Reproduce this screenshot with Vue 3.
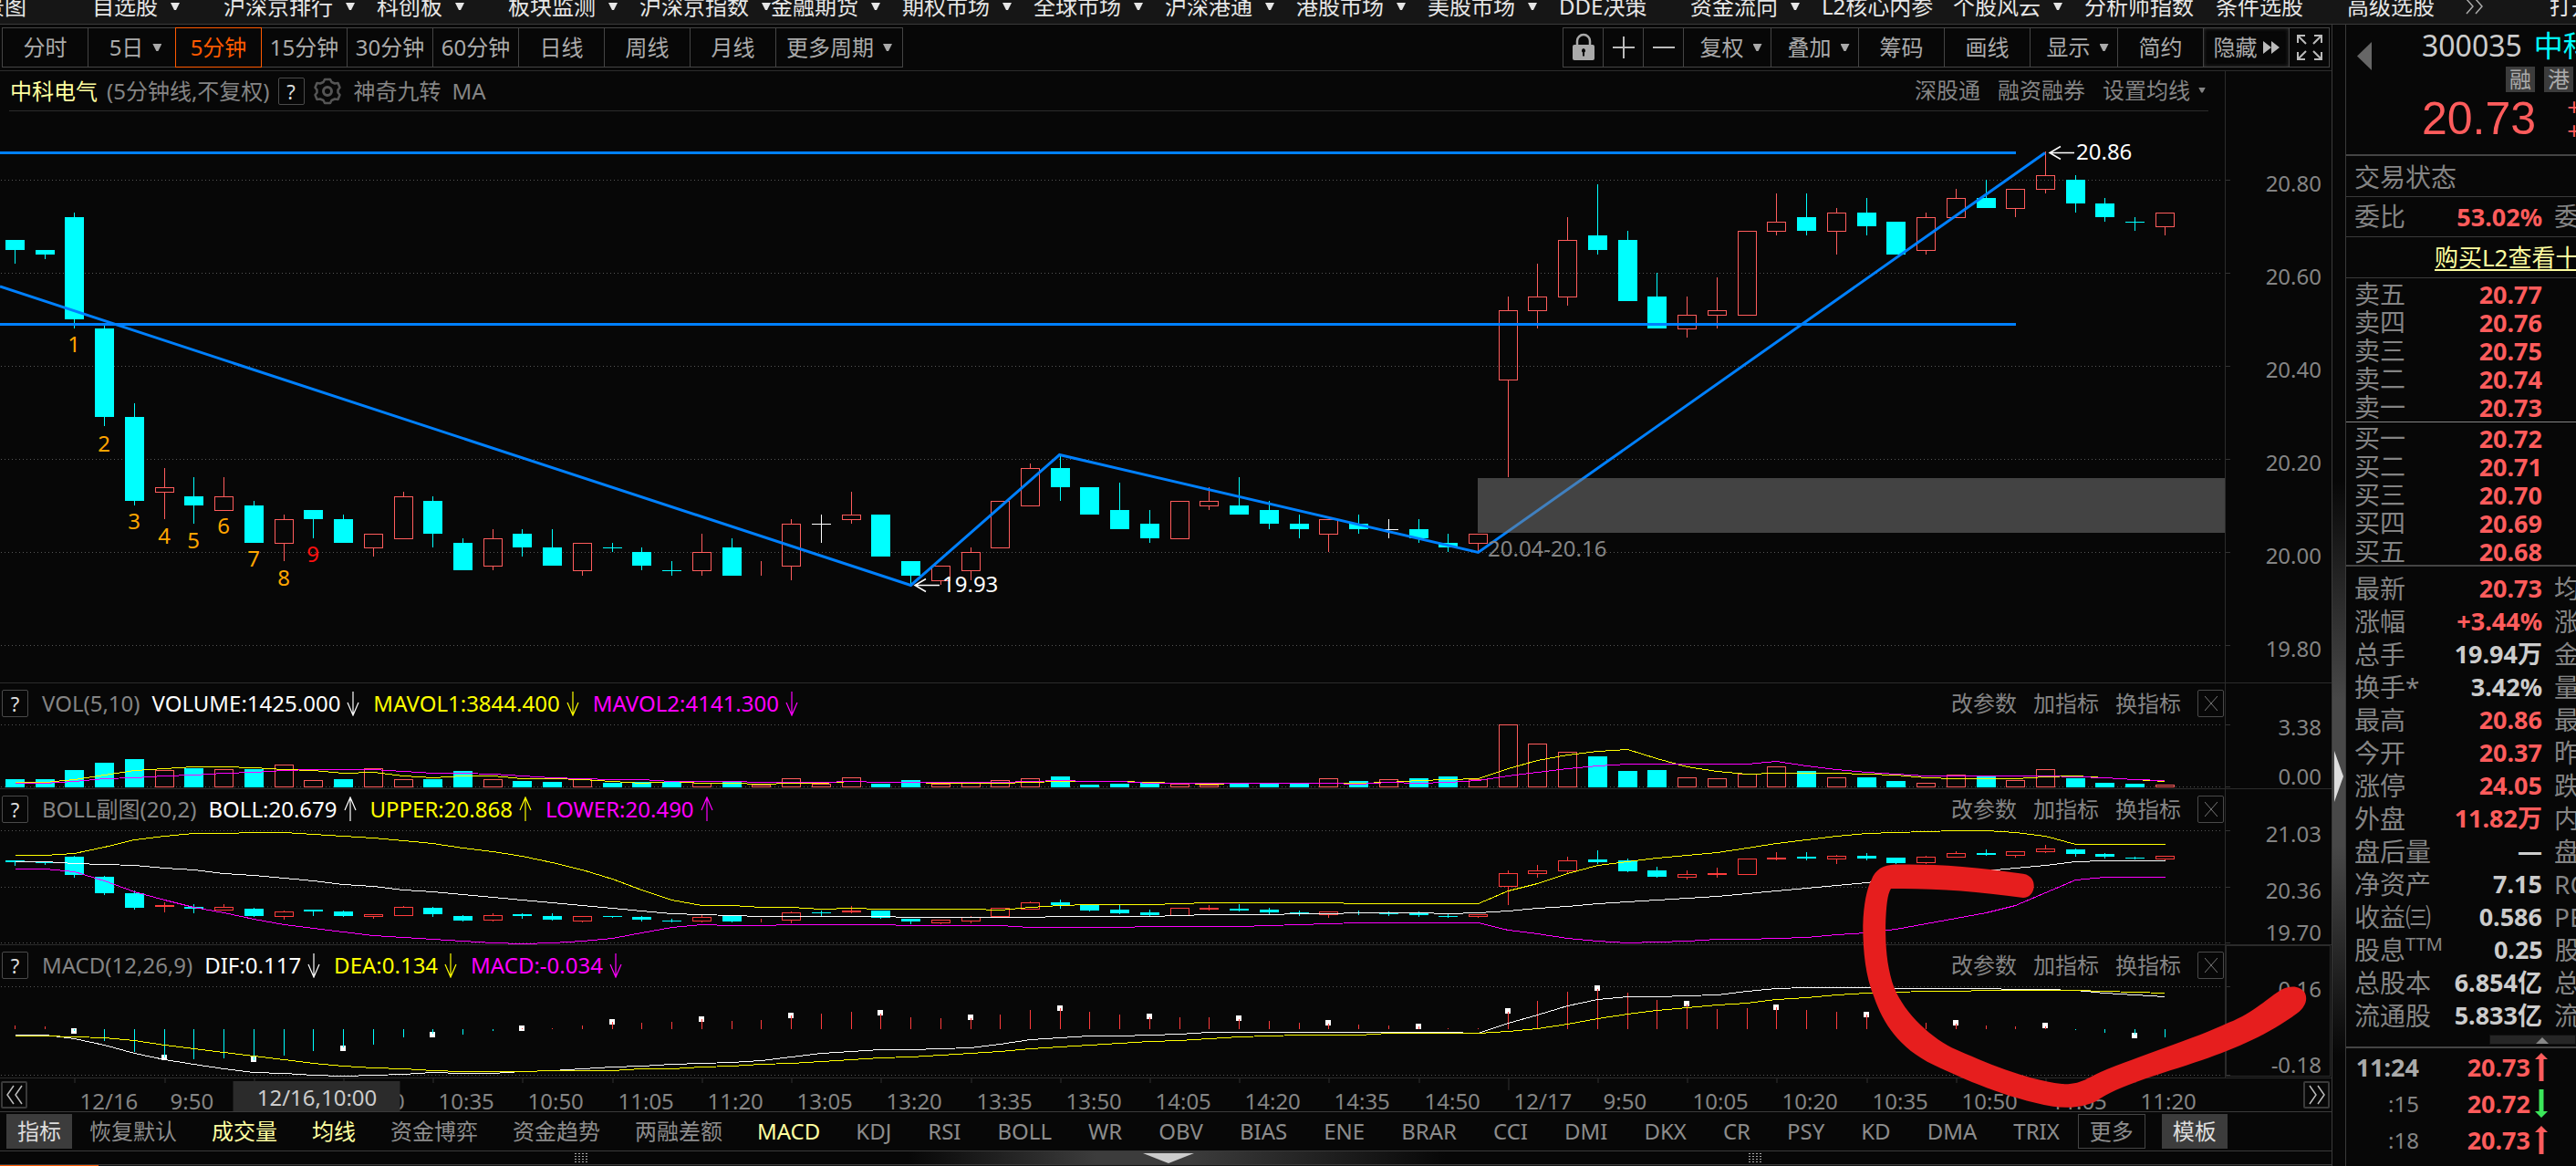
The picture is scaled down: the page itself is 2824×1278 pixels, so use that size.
<script setup>
const navItems = [
  { t: '全景图' }, { t: '自选股', a: 1 }, { t: '沪深京排行', a: 1, w: 1 }, { t: '科创板', a: 1 },
  { t: '板块监测', a: 1 }, { t: '沪深京指数', a: 1 }, { t: '金融期货', a: 1 }, { t: '期权市场', a: 1 },
  { t: '全球市场', a: 1 }, { t: '沪深港通', a: 1 }, { t: '港股市场', a: 1 }, { t: '美股市场', a: 1 },
  { t: 'DDE决策' }, { t: '资金流向', a: 1 }, { t: 'L2核心内参' }, { t: '个股风云', a: 1 },
  { t: '分析师指数' }, { t: '条件选股' }, { t: '高级选股' }
]
const periods = ['分时', '5日', '5分钟', '15分钟', '30分钟', '60分钟', '日线', '周线', '月线']
const tools = [
  { t: '复权', a: 1 }, { t: '叠加', a: 1 }, { t: '筹码' }, { t: '画线' }, { t: '显示', a: 1 }, { t: '简约' }
]
const tabs = [
  { t: '恢复默认' }, { t: '成交量', on: 1 }, { t: '均线', on: 1 }, { t: '资金博弈' }, { t: '资金趋势' },
  { t: '两融差额' }, { t: 'MACD', on: 1 }, { t: 'KDJ' }, { t: 'RSI' }, { t: 'BOLL' }, { t: 'WR' },
  { t: 'OBV' }, { t: 'BIAS' }, { t: 'ENE' }, { t: 'BRAR' }, { t: 'CCI' }, { t: 'DMI' }, { t: 'DKX' },
  { t: 'CR' }, { t: 'PSY' }, { t: 'KD' }, { t: 'DMA' }, { t: 'TRIX' }
]

// [kind, high, body top, body bottom, low] in cents above 19.00; r = rise, c = fall, w = flat
const candles = [
  ['c', 167, 167, 165, 162], ['c', 165, 165, 164, 163], ['c', 173, 172, 150, 148], ['c', 149, 148, 129, 127],
  ['c', 132, 129, 111, 110], ['r', 118, 114, 113, 107], ['c', 116, 112, 110, 106], ['r', 116, 112, 109, 109],
  ['c', 111, 110, 102, 102], ['r', 108, 107, 102, 98], ['c', 109, 109, 107, 103], ['c', 108, 107, 102, 102],
  ['r', 104, 104, 101, 99], ['r', 113, 112, 103, 103], ['c', 112, 111, 104, 101], ['c', 103, 102, 96, 96],
  ['r', 105, 103, 97, 96], ['c', 105, 104, 101, 99], ['c', 105, 101, 97, 97], ['r', 102, 102, 96, 95],
  ['c', 102, 101, 101, 100], ['c', 101, 100, 97, 96], ['c', 98, 96, 96, 95], ['r', 104, 100, 96, 95],
  ['c', 103, 101, 95, 95], ['r', 98, 96, 96, 95], ['r', 107, 106, 97, 94], ['w', 108, 106, 106, 102],
  ['r', 113, 108, 107, 106], ['c', 108, 108, 99, 99], ['c', 98, 98, 95, 93], ['r', 97, 97, 94, 93],
  ['r', 101, 100, 96, 94], ['r', 111, 111, 101, 101], ['r', 119, 118, 110, 110], ['c', 121, 118, 114, 111],
  ['c', 114, 114, 108, 108], ['c', 115, 109, 105, 105], ['c', 109, 106, 103, 102], ['r', 111, 111, 103, 103],
  ['r', 114, 111, 110, 109], ['c', 116, 110, 108, 108], ['c', 111, 109, 106, 105], ['c', 108, 106, 105, 103],
  ['r', 107, 107, 104, 100], ['c', 108, 106, 105, 104], ['w', 107, 105, 105, 103], ['c', 107, 105, 103, 102],
  ['c', 104, 102, 101, 100], ['r', 104, 104, 102, 100], ['r', 155, 152, 137, 116], ['r', 162, 155, 152, 148],
  ['r', 172, 167, 155, 153], ['c', 179, 168, 165, 164], ['c', 169, 167, 154, 154], ['c', 160, 155, 148, 148],
  ['r', 155, 151, 148, 146], ['r', 159, 152, 151, 148], ['r', 169, 169, 151, 151], ['r', 177, 171, 169, 168],
  ['c', 177, 172, 169, 168], ['r', 174, 173, 169, 164], ['c', 176, 173, 170, 168], ['c', 171, 171, 164, 164],
  ['r', 173, 172, 165, 164], ['r', 178, 176, 172, 172], ['c', 180, 176, 174, 174], ['r', 178, 178, 174, 172],
  ['r', 186, 181, 178, 177], ['c', 181, 180, 175, 173], ['c', 176, 175, 172, 171], ['c', 172, 171, 171, 169],
  ['r', 173, 173, 170, 168]
]
const volumes = [25, 25, 54, 77, 89, 53, 60, 56, 57, 70, 21, 25, 59, 24, 25, 51, 24, 19, 16, 24, 13, 15, 17, 12, 15, 6, 27, 9, 30, 10, 22, 9, 12, 21, 27, 33, 7, 10, 14, 9, 8, 11, 11, 11, 27, 19, 24, 28, 33, 26, 199, 137, 111, 98, 51, 54, 32, 27, 43, 67, 51, 32, 31, 19, 12, 38, 34, 21, 56, 28, 13, 10, 6]
const volMa5 = [340, 340, 331, 318, 303, 297, 290, 290, 295, 299, 303, 313, 310, 320, 327, 322, 322, 330, 330, 331, 339, 343, 339, 343, 343, 346, 344, 343, 339, 341, 340, 343, 343, 343, 341, 337, 337, 337, 340, 343, 348, 345, 345, 345, 343, 343, 340, 336, 331, 330, 296, 272, 254, 243, 237, 266, 290, 305, 316, 313, 313, 313, 314, 319, 326, 330, 330, 330, 324, 322, 327, 332, 337]
const volMa10 = [345, 345, 339, 329, 325, 320, 317, 312, 308, 302, 301, 301, 301, 307, 313, 313, 316, 322, 325, 329, 331, 331, 337, 337, 337, 342, 342, 342, 339, 342, 342, 342, 342, 342, 339, 336, 337, 339, 343, 343, 343, 343, 343, 343, 343, 346, 342, 343, 340, 336, 320, 308, 296, 288, 284, 282, 282, 282, 282, 275, 288, 300, 310, 316, 322, 322, 322, 322, 322, 324, 327, 332, 334]
const bollUpper = [575, 575, 569, 549, 526, 514, 505, 505, 502, 502, 508, 514, 520, 528, 537, 551, 563, 578, 598, 620, 650, 685, 717, 735, 735, 741, 741, 747, 744, 745, 747, 747, 747, 750, 739, 735, 732, 732, 732, 729, 727, 727, 727, 727, 727, 730, 730, 730, 730, 730, 688, 664, 631, 606, 594, 584, 574, 566, 552, 537, 526, 514, 505, 502, 499, 496, 496, 501, 514, 540, 540, 540, 540]
const bollMid = [596, 596, 600, 602, 607, 616, 622, 631, 639, 648, 657, 666, 674, 684, 692, 700, 709, 718, 727, 735, 744, 753, 762, 765, 767, 770, 770, 770, 770, 770, 773, 773, 773, 773, 773, 770, 770, 768, 768, 767, 765, 765, 763, 762, 760, 759, 759, 759, 762, 759, 753, 744, 736, 728, 723, 718, 712, 705, 698, 688, 679, 671, 663, 650, 640, 632, 625, 615, 606, 596, 593, 593, 591]
const bollLower = [619, 619, 628, 655, 690, 716, 739, 757, 779, 795, 806, 820, 832, 837, 843, 849, 855, 858, 855, 849, 839, 822, 804, 797, 800, 800, 797, 797, 797, 797, 800, 800, 800, 800, 804, 804, 804, 804, 802, 802, 802, 802, 799, 797, 794, 791, 791, 791, 791, 791, 814, 826, 840, 849, 853, 852, 849, 843, 843, 840, 836, 829, 821, 809, 794, 776, 759, 733, 695, 652, 645, 643, 643]
const macdBars = [1119, 1121, 1137, 1169, 1204, 1220, 1227, 1224, 1230, 1215, 1201, 1190, 1180, 1158, 1145, 1148, 1137, 1128, 1128, 1119, 1108, 1110, 1108, 1100, 1104, 1101, 1088, 1081, 1075, 1080, 1092, 1096, 1095, 1084, 1070, 1065, 1075, 1084, 1092, 1092, 1092, 1098, 1105, 1110, 1114, 1116, 1119, 1123, 1127, 1127, 1075, 1040, 1011, 1003, 1014, 1038, 1052, 1066, 1063, 1060, 1070, 1075, 1085, 1095, 1110, 1114, 1119, 1121, 1122, 1133, 1142, 1148, 1157]
const dif = [1149, 1149, 1159, 1180, 1208, 1227, 1243, 1255, 1267, 1272, 1276, 1280, 1278, 1273, 1269, 1272, 1270, 1264, 1263, 1257, 1250, 1246, 1243, 1238, 1235, 1230, 1219, 1208, 1200, 1196, 1196, 1193, 1190, 1178, 1164, 1156, 1152, 1150, 1149, 1146, 1141, 1141, 1141, 1141, 1139, 1140, 1141, 1141, 1141, 1143, 1109, 1083, 1054, 1034, 1025, 1025, 1022, 1020, 1008, 1001, 998, 996, 996, 1000, 1001, 999, 1001, 1002, 1002, 1006, 1015, 1020, 1027]
const dea = [1152, 1152, 1153, 1158, 1167, 1179, 1193, 1204, 1216, 1228, 1238, 1246, 1252, 1257, 1261, 1264, 1264, 1264, 1263, 1261, 1261, 1257, 1255, 1250, 1247, 1242, 1239, 1234, 1226, 1220, 1217, 1212, 1208, 1202, 1193, 1185, 1179, 1174, 1170, 1165, 1159, 1155, 1152, 1149, 1147, 1147, 1143, 1143, 1143, 1143, 1138, 1127, 1112, 1095, 1082, 1071, 1060, 1052, 1045, 1036, 1028, 1021, 1015, 1012, 1009, 1007, 1006, 1005, 1005, 1006, 1007, 1010, 1013]
const squareTops = [1128, 1213, 1218, 1183, 1140, 1119, 1099, 1090, 1078, 1070, 1084, 1055, 1081, 1087, 1102, 1113, 1064, 991, 1040, 1052, 1075, 1102, 1110, 1142]

const SCALE = 2.9145
const x = i => Math.round(i * 32.735) + 16
const level = v => Math.round(740 + v / SCALE)
const line = arr => arr.map((v, i) => `${x(i) + 0.5},${level(v) + 0.5}`).join(' ')
const priceY = c => Math.round(197 + (180 - c) * 5.1)
const bollY = c => Math.round(910 + (203 - c) * 0.926)

const build = fy => candles.map(([k, h, t, b, l], i) => ({
  k, x: x(i), h: fy(h), t: fy(t), b: fy(b), l: fy(l)
}))
const priceCandles = build(priceY)
const bollCandles = build(bollY).map(c => ({ ...c, k: c.k === 'w' ? 'c' : c.k }))
const volBars = volumes.map((v, i) => ({
  x: x(i), y: level(357 - v), k: i === 10 || candles[i][0] !== 'c' ? 'r' : 'c'
}))
const bars = macdBars.map((v, i) => ({ x: x(i), y: level(v), up: v < 1130 }))
const squares = squareTops.map((v, n) => ({ x: x(2 + n * 3) - 3, y: level(v) }))

const priceGrid = [['20.80', 197], ['20.60', 299], ['20.40', 401], ['20.20', 503], ['20.00', 605], ['19.80', 707]]
const turns = [[2, 386], [3, 495], [4, 580], [5, 596], [6, 601], [7, 585], [8, 621], [9, 642], [10, 616]]
const times = ['12/16', '9:50', '', '10:20', '10:35', '10:50', '11:05', '11:20', '13:05', '13:20', '13:35', '13:50', '14:05', '14:20', '14:35', '14:50', '12/17', '9:50', '10:05', '10:20', '10:35', '10:50', '11:05', '11:20']
  .map((t, n) => ({ t, x: x(2 + n * 3), long: n === 16 }))

const panes = [
  {
    id: 'vol', name: 'VOL(5,10)', top: 793, h: 71,
    vals: [['VOLUME:1425.000', 'white', 0], ['MAVOL1:3844.400', 'yellow', 0], ['MAVOL2:4141.300', 'magenta', 0]],
    grid: [794, 862], labels: [['3.38', 806], ['0.00', 860]],
    lines: [[volMa5, '#ffff00'], [volMa10, '#ff00ff']]
  },
  {
    id: 'boll', name: 'BOLL副图(20,2)', top: 909, h: 126,
    vals: [['BOLL:20.679', 'white', 1], ['UPPER:20.868', 'yellow', 1], ['LOWER:20.490', 'magenta', 1]],
    grid: [910, 972, 1033], labels: [['21.03', 923], ['20.36', 985], ['19.70', 1031]],
    lines: [[bollUpper, '#ffff00'], [bollMid, '#ffffff'], [bollLower, '#ff00ff']]
  },
  {
    id: 'macd', name: 'MACD(12,26,9)', top: 1080, h: 101,
    vals: [['DIF:0.117', 'white', 0], ['DEA:0.134', 'yellow', 0], ['MACD:-0.034', 'magenta', 0]],
    grid: [1081, 1178], labels: [['0.16', 1093], ['-0.18', 1176]],
    lines: [[dif, '#ffffff'], [dea, '#ffff00']]
  }
]

const asks = [['卖五', '20.77'], ['卖四', '20.76'], ['卖三', '20.75'], ['卖二', '20.74'], ['卖一', '20.73']]
const bids = [['买一', '20.72'], ['买二', '20.71'], ['买三', '20.70'], ['买四', '20.69'], ['买五', '20.68']]
const stats = [
  ['最新', '20.73', 'up', '均价'], ['涨幅', '+3.44%', 'up', '涨跌'], ['总手', '19.94万', '', '金额'],
  ['换手*', '3.42%', '', '量比'], ['最高', '20.86', 'up', '最低'], ['今开', '20.37', 'up', '昨收'],
  ['涨停', '24.05', 'up', '跌停'], ['外盘', '11.82万', 'up', '内盘'], ['盘后量', '—', '', '盘后额'],
  ['净资产', '7.15', '', 'ROE'], ['收益㈢', '0.586', '', 'PE'], ['股息', '0.25', '', '股息率'],
  ['总股本', '6.854亿', '', '总值'], ['流通股', '5.833亿', '', '流值']
]
const ticks = [['11:24', '20.73', 1], [':15', '20.72', 0], [':18', '20.73', 1]]
</script>

<template>
  <div class="app">
    <nav class="nav">
      <a v-for="n in navItems" :key="n.t" href="#" :class="{ wide: n.w }">{{ n.t }}<i v-if="n.a" class="tri"></i></a>
      <a href="#" class="next" aria-label="更多">
        <svg width="20" height="18" viewBox="0 0 20 18"><path d="M1 1l7 8-7 8M11 1l7 8-7 8" fill="none" stroke="#aaa" stroke-width="1.5" /></svg>
      </a>
      <a href="#">打开</a>
    </nav>

    <div class="body">
      <main class="main">
        <div class="toolbar">
          <div class="group">
            <button v-for="p in periods" :key="p" :class="{ active: p === '5分钟', drop: p === '5日' }">{{ p }}<i v-if="p === '5日'" class="tri"></i></button>
            <button class="more">更多周期<i class="tri"></i></button>
          </div>
          <div class="group">
            <button class="sq" aria-label="锁定">
              <svg width="26" height="32" viewBox="0 0 26 32"><path d="M6 14V9a7 7 0 0 1 14 0v5" fill="none" stroke="#aaa" stroke-width="2.5" /><rect x="1" y="13" width="24" height="17" rx="2" fill="#aaa" /><path d="M13 17a2.5 2.5 0 0 1 1 4.500v4h-2v-4a2.500 2.500 0 0 1 1-4.500z" fill="#070707" /></svg>
            </button>
            <button class="sq" aria-label="放大"><svg width="24" height="24" viewBox="0 0 24 24"><path d="M12 0v24M0 12h24" stroke="#bbb" stroke-width="2" /></svg></button>
            <button class="sq" aria-label="缩小"><svg width="24" height="24" viewBox="0 0 24 24"><path d="M0 12h24" stroke="#bbb" stroke-width="2" /></svg></button>
            <button v-for="t in tools" :key="t.t" :class="{ drop: t.a }">{{ t.t }}<i v-if="t.a" class="tri"></i></button>
            <button class="hide">隐藏<svg width="18" height="14" viewBox="0 0 18 14"><path d="M0 0l9 7-9 7zM9 0l9 7-9 7z" fill="#bbb" /></svg></button>
            <button class="sq" aria-label="全屏">
              <svg width="28" height="28" viewBox="0 0 28 28"><path d="M1 9V1h8M2 2l8 8M19 1h8v8M26 2l-8 8M1 19v8h8M2 26l8-8M27 19v8h-8M26 26l-8-8" fill="none" stroke="#bbb" stroke-width="2" /></svg>
            </button>
          </div>
        </div>

        <section class="pane">
          <header class="title">
            <div class="plot">
              <b class="stock">中科电气</b>
              <span class="cycle">(5分钟线,不复权)</span>
              <button class="box help">?</button>
              <svg class="gear" width="30" height="30" viewBox="0 0 30 30"><path d="M12 2h6l1.500 3 3.500 1.500 3.500-.5 2 5-2 2.500v3l2 2.500-2 5-3.500-.5-3.500 1.500L18 28h-6l-1.500-3L7 23.500l-3.500.5-2-5 2-2.500v-3l-2-2.500 2-5 3.500.5L10.500 5z" fill="none" stroke="#555" stroke-width="2.500" stroke-linejoin="round" /><circle cx="15" cy="15" r="4.500" fill="none" stroke="#555" stroke-width="3" /></svg>
              <span>神奇九转</span><span class="ma">MA</span>
              <div class="links"><a href="#">深股通</a><a href="#">融资融券</a><a href="#">设置均线<i class="tri"></i></a></div>
            </div>
            <div class="scale"></div>
          </header>
          <svg class="chart" viewBox="0 121 2556 627">
            <g shape-rendering="crispEdges">
              <path d="M10 121.500H2421" stroke="#2b2b2b" />
              <path d="M2439.500 121V748" stroke="#2b2b2b" />
              <g v-for="g in priceGrid" :key="g[0]">
                <path :d="`M1 ${g[1] + 0.5}H2436`" stroke="#555" stroke-dasharray="1 3" />
                <path :d="`M2440 ${g[1] + 0.5}h5`" stroke="#333" />
              </g>
              <g v-for="c in priceCandles" :key="c.x">
                <template v-if="c.k === 'c'">
                  <path :d="`M${c.x + 0.5} ${c.h}V${c.l}`" stroke="#00ffff" />
                  <rect :x="c.x - 10" :y="c.t" width="21" :height="Math.max(1, c.b - c.t)" fill="#00ffff" />
                </template>
                <template v-else-if="c.k === 'r'">
                  <path :d="`M${c.x + 0.5} ${c.h}V${c.t}M${c.x + 0.5} ${c.b}V${c.l}`" stroke="#ff5c5c" />
                  <rect :x="c.x - 9.500" :y="c.t + 0.5" width="20" :height="c.b - c.t" fill="none" stroke="#ff5c5c" />
                </template>
                <path v-else :d="`M${c.x + 0.5} ${c.h}V${c.l}M${c.x - 10} ${c.t + 0.5}h21`" stroke="#fff" />
              </g>
              <g fill="none" stroke="#0080ff" stroke-width="3">
                <path d="M0 167.500H2210M0 355.500H2210" />
              </g>
            </g>
            <path d="M0 314L998.500 641.500L1161.500 498.500L1620.500 605.500L2242 167.500" fill="none" stroke="#0080ff" stroke-width="3" />
            <rect x="1620" y="524" width="819" height="60" fill="#808080" fill-opacity=".5" />
            <path d="M2274 167.500H2247M2259 160.500l-12 7 12 7M1030 641.500H1003M1015 634.500l-12 7 12 7" fill="none" stroke="#fff" stroke-width="1.500" />
            <text class="t white" x="2276" y="175">20.86</text>
            <text class="t white" x="1033" y="649">19.93</text>
            <text class="t" x="1631" y="610">20.04-20.16</text>
            <text v-for="(n, i) in turns" :key="i" class="t turn" :class="{ last: i === 8 }" :x="x(n[0])" :y="n[1]">{{ i + 1 }}</text>
            <text v-for="g in priceGrid" :key="g[0]" class="t end" x="2545" :y="g[1] + 13">{{ g[0] }}</text>
          </svg>
        </section>

        <section v-for="p in panes" :key="p.id" class="pane">
          <header class="head">
            <div class="plot">
              <button class="box help">?</button>
              <span class="name">{{ p.name }}</span>
              <span v-for="v in p.vals" :key="v[0]" class="val" :class="v[1]">{{ v[0] }}<svg width="14" height="28" viewBox="0 0 14 28"><path :d="v[2] ? 'M7 1v26M1 15L7 1l6 14' : 'M7 1v26M1 13l6 14 6-14'" fill="none" stroke="currentColor" stroke-width="1.200" /></svg></span>
              <div class="links"><a href="#">改参数</a><a href="#">加指标</a><a href="#">换指标</a></div>
              <button class="box" aria-label="关闭"><svg width="14" height="16" viewBox="0 0 14 16"><path d="M0 0l14 16M14 0L0 16" stroke="#777" /></svg></button>
            </div>
            <div class="scale"></div>
          </header>
          <svg class="chart" :viewBox="`0 ${p.top} 2556 ${p.h}`">
            <g shape-rendering="crispEdges" fill="none">
              <path :d="`M2439.500 ${p.top}v${p.h}`" stroke="#2b2b2b" />
              <path v-for="g in p.grid" :key="g" :d="`M1 ${g + 0.5}H2436`" stroke="#555" stroke-dasharray="1 3" />
              <path v-for="g in p.grid" :key="'k' + g" :d="`M2440 ${g + 0.5}h5`" stroke="#333" />
              <rect v-if="p.id === 'macd'" x="2440.500" y="1036.500" width="114" height="143" stroke="#2b2b2b" />
              <template v-if="p.id === 'vol'">
                <template v-for="b in volBars" :key="b.x">
                  <rect v-if="b.k === 'c'" :x="b.x - 10" :y="b.y" width="21" :height="863 - b.y" fill="#00ffff" />
                  <rect v-else :x="b.x - 9.500" :y="b.y + 0.5" width="20" :height="862 - b.y" stroke="#ff5c5c" />
                </template>
              </template>
              <template v-if="p.id === 'boll'">
                <g v-for="c in bollCandles" :key="c.x">
                  <path :d="`M${c.x + 0.5} ${c.h}V${c.t}M${c.x + 0.5} ${c.b}V${c.l + 1}`" :stroke="c.k === 'c' ? '#00ffff' : '#ff3c3c'" />
                  <rect v-if="c.k === 'c'" :x="c.x - 10" :y="c.t" width="21" :height="Math.max(1, c.b - c.t)" fill="#00ffff" />
                  <rect v-else :x="c.x - 9.500" :y="c.t + 0.5" width="20" :height="c.b - c.t" stroke="#ff3c3c" />
                </g>
              </template>
              <template v-if="p.id === 'macd'">
                <rect v-for="s in squares" :key="s.x" :x="s.x" :y="s.y" width="6" height="6" fill="#fff" />
                <path v-for="b in bars" :key="b.x" :d="`M${b.x + 0.5} 1127.500V${b.y}`" :stroke="b.up ? '#ff3c3c' : '#00ffff'" />
              </template>
              <polyline v-for="l in p.lines" :key="l[1]" :points="line(l[0])" :stroke="l[1]" />
            </g>
            <text v-for="l in p.labels" :key="l[0]" class="t end" x="2545" :y="l[1]">{{ l[0] }}</text>
          </svg>
        </section>

        <div class="timeline">
          <button class="box" aria-label="向前"><svg width="20" height="22" viewBox="0 0 20 22"><path d="M9 1L2 11l7 10M18 1l-7 10 7 10" fill="none" stroke="#bbb" stroke-width="1.500" /></svg></button>
          <svg class="chart" viewBox="30 1182 2494 36">
            <path v-for="t in times" :key="t.x" :d="`M${t.x + 0.5} 1182v${t.long ? 13 : 5}`" stroke="#333" />
            <text v-for="t in times" :key="t.x" class="t" :x="t.x + 6" y="1216">{{ t.t }}</text>
            <rect x="255" y="1185" width="183" height="33" fill="#2b2b2b" />
            <text class="t cursor" x="347" y="1212">12/16,10:00</text>
          </svg>
          <button class="box" aria-label="向后"><svg width="20" height="22" viewBox="0 0 20 22"><path d="M2 1l7 10-7 10M11 1l7 10-7 10" fill="none" stroke="#bbb" stroke-width="1.500" /></svg></button>
        </div>

        <div class="tabs">
          <button class="fill">指标</button>
          <button v-for="(t, i) in tabs" :key="t.t" :class="{ on: t.on, latin: i > 6 }">{{ t.t }}</button>
          <button class="outline">更多</button>
          <button class="fill">模板</button>
        </div>

        <div class="grip">
          <i class="dots"></i>
          <svg width="56" height="11" viewBox="0 0 56 11"><path d="M0 0h56L28 11z" fill="#ccc" /></svg>
          <i class="dots"></i>
        </div>
        <div class="foot"><i></i></div>

        <svg class="mark" viewBox="0 0 2556 1250">
          <g transform="translate(1800 713) scale(.65306 .34311)">
            <path fill="#e61e1e" d="M425 605C480 602 560 610 640 635C655 640 658 660 658 673C658 695 650 711 640 711C560 690 490 680 418 682C412 700 410 740 409 800C409 870 411 920 420 980C435 1070 480 1150 520 1190C580 1240 640 1290 705 1306C735 1308 745 1290 770 1268C830 1220 930 1160 985 1110C1030 1075 1050 1030 1075 1003C1090 990 1105 992 1113 1015C1118 1035 1114 1060 1100 1080C1050 1150 1000 1190 940 1230C870 1275 800 1310 762 1362C740 1380 715 1385 690 1378C610 1350 540 1290 490 1245C430 1190 405 1110 390 1030C375 960 371 880 371 800C372 730 378 680 385 655C392 620 405 607 425 605Z" />
          </g>
        </svg>
      </main>

      <div class="splitter"><svg width="10" height="56" viewBox="0 0 10 56"><path d="M0 0l10 28L0 56z" fill="#ddd" /></svg></div>

      <aside class="side">
        <div class="quote">
          <svg class="prev" width="16" height="31" viewBox="0 0 16 31"><path d="M16 0v31L0 15.500z" fill="#666" /></svg>
          <div class="code"><span>300035</span><span class="cyan">中科电气</span></div>
          <div class="badges"><span>融</span><span>港</span></div>
          <div class="price"><strong>20.73</strong><div><span>+0.69</span><span>+3.44%</span></div></div>
        </div>
        <div class="state">交易状态</div>
        <div class="row ratio"><span>委比</span><b class="up">53.02%</b><span>委差</span></div>
        <div class="buy"><a href="#">购买L2查看十档</a></div>
        <div class="book">
          <div v-for="r in asks" :key="r[0]" class="row"><span>{{ r[0] }}</span><b class="up">{{ r[1] }}</b></div>
        </div>
        <div class="book bids">
          <div v-for="r in bids" :key="r[0]" class="row"><span>{{ r[0] }}</span><b class="up">{{ r[1] }}</b></div>
        </div>
        <div class="stats">
          <div v-for="r in stats" :key="r[0]" class="row"><span>{{ r[0] }}<sup v-if="r[0] === '股息'">TTM</sup></span><b :class="r[2]">{{ r[1] }}</b><span>{{ r[3] }}</span></div>
        </div>
        <div class="fold"><button aria-label="收起"><svg width="14" height="7" viewBox="0 0 14 7"><path d="M0 7l7-7 7 7z" fill="#888" /></svg></button></div>
        <div class="ticks">
          <div v-for="(r, i) in ticks" :key="i" class="tick">
            <span :class="{ first: i === 0 }">{{ r[0] }}</span><b class="up">{{ r[1] }}</b>
            <svg width="14" height="32" viewBox="0 0 14 32"><path :d="r[2] ? 'M7 0l7 7H9.500v24h-5V7H0z' : 'M7 31l7-7H9.500V0h-5v24H0z'" :fill="r[2] ? '#ff5c5c' : '#3ce65a'" /></svg>
          </div>
        </div>
      </aside>
    </div>
  </div>
</template>

<style>
body { background: #070707; }
</style>

<style scoped>
.app { background: #070707; color: #848484; font: 24px/32px "Noto Sans", "Noto Sans CJK SC", sans-serif; overflow: hidden; white-space: nowrap; }
.app * { box-sizing: border-box; }
a { color: inherit; text-decoration: none; }
button { font: inherit; color: inherit; background: none; border: 0; padding: 0; margin: 0; }
svg { display: block; }
.tri { display: inline-block; width: 10px; height: 8px; background: currentColor; clip-path: polygon(0 0, 100% 0, 60% 100%, 40% 100%); }

.nav { display: flex; align-items: flex-end; height: 27px; margin-left: -43px; padding-bottom: 3px; background: #161616; border-bottom: 1px solid #3a3a3a; color: #e6e6e6; overflow: hidden; }
.nav a { flex: 0 0 144px; display: flex; align-items: center; gap: 14px; }
.nav a.wide { flex-basis: 168px; }
.nav .next { flex-basis: 92px; margin-left: -14px; height: 32px; }

.body { display: flex; align-items: stretch; }
.main { flex: 1; min-width: 0; position: relative; }
.toolbar { display: flex; justify-content: space-between; height: 51px; padding: 3px 3px 0 2px; border-bottom: 1px solid #2b2b2b; color: #aaa; }
.group { display: flex; height: 44px; }
.group button { width: 95px; margin-right: -1px; border: 1px solid #444; display: flex; align-items: center; justify-content: center; gap: 10px; }
.group button.drop { width: 97px; padding-left: 8px; }
.group button.active { color: #ff5a00; border-color: #ff5a00; position: relative; }
.group button.more { width: 140px; }
.group button.sq { width: 45px; }
.group button.hide { gap: 6px; box-shadow: inset 0 0 4px #333; }

.pane { border-bottom: 1px solid #2b2b2b; }
.chart { width: 100%; height: auto; overflow: visible; }
.title, .head { display: flex; height: 44px; }
.title { height: 43px; }
.plot { flex: 1; display: flex; align-items: center; padding: 0 1px 0 2px; }
.scale { flex: 0 0 117px; border-left: 1px solid #2b2b2b; }
.title .plot { padding: 0 21px 0 11px; }
.stock { color: #ffffa0; font-weight: 400; margin-right: 10px; }
.box { width: 29px; height: 30px; border: 1px solid #4a4a4a; border-radius: 2px; display: flex; align-items: center; justify-content: center; color: #ddd; font-size: 22px; }
.title .help { margin: 0 10px 0 9px; }
.gear { margin-right: 14px; }
.ma { margin-left: 12px; }
.links { display: flex; gap: 18px; margin-left: auto; margin-right: 18px; }
.title .links { margin-right: 0; gap: 19px; padding-bottom: 2px; }
.links a { display: flex; align-items: center; gap: 9px; }
.title .links .tri { width: 8px; height: 6px; }
.name { margin: 0 13px 0 15px; }
.val { display: flex; align-items: center; gap: 7px; margin-right: 15px; }
.white { color: #fff; }
.yellow { color: #ff0; }
.magenta { color: #f0f; }
.t { font-size: 24px; fill: #848484; }
.t.white { fill: #fff; }
.t.end { text-anchor: end; }
.t.turn, .t.cursor { text-anchor: middle; }
.t.turn { fill: #ffa500; }
.t.last { fill: #f11; }
.t.cursor { fill: #ccc; }

.timeline { display: flex; align-items: center; height: 37px; padding: 0 2px 0 1px; border-bottom: 1px solid #3a3a3a; }
.timeline .chart { flex: 1; min-width: 0; }
.timeline .box { flex: 0 0 29px; border-width: 2px; border-color: #3a3a3a; }

.tabs { display: flex; align-items: center; height: 43px; padding-left: 7px; border-bottom: 1px solid #3a3a3a; color: #8c8c8c; }
.tabs button { height: 38px; padding: 0 19px; }
.tabs .latin { padding: 0 20px; }
.tabs .on { color: #ffffa0; }
.tabs .fill { padding: 0 12px; background: #3c3c3c; color: #ddd; }
.tabs .outline { padding: 0 12px; border: 1px solid #444; margin-right: 18px; }

.grip { display: flex; justify-content: space-between; align-items: center; height: 15px; padding: 0 calc(25% - 15px) 0 calc(25% - 9px); border-bottom: 1px solid #3a3a3a; background: linear-gradient(90deg, #070707 39%, #3c3c3c 47%, #3c3c3c 51%, #070707 62%); }
.dots { width: 15px; height: 11px; background: repeating-linear-gradient(90deg, #aaa 0 2px, transparent 2px 4px); -webkit-mask: repeating-linear-gradient(#000 0 1px, transparent 1px 3px); mask: repeating-linear-gradient(#000 0 1px, transparent 1px 3px); }
.foot { height: 1px; background: #161616; }
.foot i { display: block; width: 108px; height: 1px; background: #ff5a00; }
.mark { position: absolute; left: 0; top: 0; width: 100%; pointer-events: none; }

.splitter { flex: 0 0 15px; border-left: 1px solid #3a3a3a; display: flex; padding: 796px 0 0 2px; background: linear-gradient(#070707 500px, #484848 740px, #484848 900px, #070707 1130px); }

.side { flex: 0 0 253px; height: auto; overflow: hidden; border-left: 1px solid #3a3a3a; font-size: 28px; }
.quote { position: relative; height: 144px; border-bottom: 2px solid #444; padding-left: 83px; }
.prev { position: absolute; left: 12px; top: 19px; }
.code { display: flex; gap: 13px; font-size: 32px; line-height: 46px; color: #ccc; }
.cyan { color: #0ff; }
.badges { display: flex; gap: 10px; margin-left: 92px; }
.badges span { width: 32px; height: 28px; background: #3c3c3c; color: #aaa; font-size: 24px; line-height: 28px; text-align: center; }
.price { display: flex; gap: 34px; color: #ff5c5c; font-family: "Liberation Sans", sans-serif; align-items: center; height: 58px; }
.price strong { font-weight: 400; font-size: 50px; }
.price div { display: flex; flex-direction: column; font-size: 26px; line-height: 26px; }
.state { height: 45px; line-height: 46px; padding-left: 9px; border-bottom: 1px solid #3a3a3a; }
.row { display: flex; padding-left: 9px; height: 36px; line-height: 36px; }
.row span:first-child { flex: 0 0 96px; }
.row b { flex: 0 0 110px; text-align: right; font-size: 27px; margin-right: 13px; color: #ccc; display: flex; justify-content: flex-end; }
.row .up, .up { color: #ff5c5c; }
.ratio { height: 44px; line-height: 43px; border-bottom: 1px solid #3a3a3a; }
.buy { height: 45px; border-bottom: 1px solid #3a3a3a; padding: 6px 0 0 97px; font-size: 26px; }
.buy a { color: #ffffa0; display: inline-block; border-bottom: 2px solid #ffffa0; height: 31px; line-height: 32px; }
.book { padding-top: 2px; height: 158px; border-bottom: 1px solid #848484; }
.book .row { height: 31px; line-height: 31px; }
.bids { border-bottom: 2px solid #444; }
.stats { padding-top: 6px; height: 512px; }
sup { font-size: 20px; line-height: 18px; }
.fold { height: 16px; padding: 1px 0 2px 157px; border-bottom: 2px solid #444; }
.fold button { width: 100%; height: 11px; padding: 2px 0 0 50px; background: #262626; border: 1px solid #111; display: block; }
.ticks { padding-top: 1px; }
.tick { display: flex; align-items: center; height: 40px; }
.tick span { flex: 0 0 80px; text-align: right; font-size: 24px; }
.tick .first { font-size: 27px; font-weight: 700; color: #aaa; }
.tick b { flex: 0 0 122px; text-align: right; font-size: 27px; }
.tick svg { margin-left: 5px; }
</style>
